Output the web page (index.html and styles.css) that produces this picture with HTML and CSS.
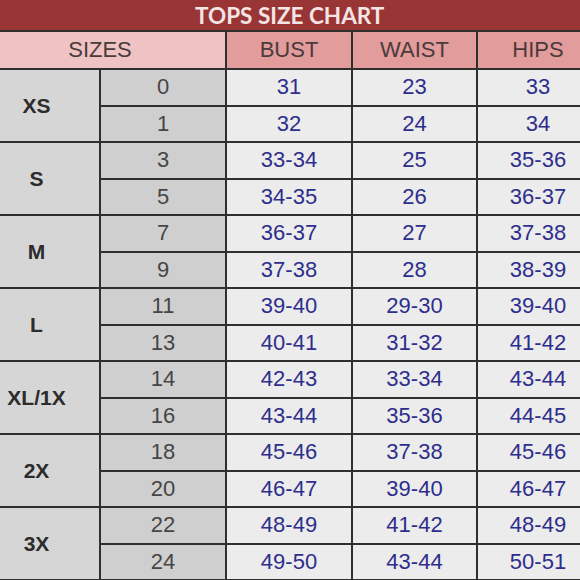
FILE: index.html
```html
<!DOCTYPE html>
<html>
<head>
<meta charset="utf-8">
<link rel="stylesheet" href="styles.css">
</head>
<body>
<div class="frame">
  <div class="chart">
    <div class="title">TOPS SIZE CHART</div>
    <div class="hd hd-sizes">SIZES</div>
    <div class="hd">BUST</div>
    <div class="hd">WAIST</div>
    <div class="hd">HIPS</div>

    <div class="lbl">XS</div>
    <div class="num">0</div><div class="val">31</div><div class="val">23</div><div class="val">33</div>
    <div class="num">1</div><div class="val">32</div><div class="val">24</div><div class="val">34</div>

    <div class="lbl">S</div>
    <div class="num">3</div><div class="val">33-34</div><div class="val">25</div><div class="val">35-36</div>
    <div class="num">5</div><div class="val">34-35</div><div class="val">26</div><div class="val">36-37</div>

    <div class="lbl">M</div>
    <div class="num">7</div><div class="val">36-37</div><div class="val">27</div><div class="val">37-38</div>
    <div class="num">9</div><div class="val">37-38</div><div class="val">28</div><div class="val">38-39</div>

    <div class="lbl">L</div>
    <div class="num">11</div><div class="val">39-40</div><div class="val">29-30</div><div class="val">39-40</div>
    <div class="num">13</div><div class="val">40-41</div><div class="val">31-32</div><div class="val">41-42</div>

    <div class="lbl">XL/1X</div>
    <div class="num">14</div><div class="val">42-43</div><div class="val">33-34</div><div class="val">43-44</div>
    <div class="num">16</div><div class="val">43-44</div><div class="val">35-36</div><div class="val">44-45</div>

    <div class="lbl">2X</div>
    <div class="num">18</div><div class="val">45-46</div><div class="val">37-38</div><div class="val">45-46</div>
    <div class="num">20</div><div class="val">46-47</div><div class="val">39-40</div><div class="val">46-47</div>

    <div class="lbl">3X</div>
    <div class="num">22</div><div class="val">48-49</div><div class="val">41-42</div><div class="val">48-49</div>
    <div class="num">24</div><div class="val">49-50</div><div class="val">43-44</div><div class="val">50-51</div>
  </div>
</div>
</body>
</html>
```
FILE: styles.css
```css
html, body {
  margin: 0;
  padding: 0;
  background: #ececec;
}

.frame {
  width: 580px;
  height: 580px;
  overflow: hidden;
}

.chart {
  width: 598px;
  height: 580px;
  box-sizing: border-box;
  padding-bottom: 1px;
  display: grid;
  grid-template-columns: 99px 124px 124px 123px 120px;
  grid-template-rows: 30px 36px repeat(14, 1fr);
  gap: 2px;
  background: #2f2f2f;
  font-family: "Liberation Sans", Arial, sans-serif;
  font-size: 22px;
}

.chart > div {
  display: flex;
  align-items: center;
  justify-content: center;
}

.title {
  grid-column: 1 / -1;
  background: #993535;
  color: #f4e4e4;
  font-family: Lato, "Open Sans", sans-serif;
  font-weight: 700;
  font-size: 22.5px;
  justify-content: flex-start !important;
  padding-left: 195px;
}

.hd {
  background: #e29c9c;
  color: #4a3a3a;
}

.hd-sizes {
  grid-column: span 2;
  background: #efc3c3;
  padding-right: 25px;
}

.lbl {
  grid-row: span 2;
  grid-column: 1;
  background: #d6d6d6;
  color: #2c2c2c;
  font-weight: 700;
  font-size: 21px;
  padding-right: 26px;
}

.num {
  background: #cfcfcf;
  color: #464646;
}

.val {
  background: #ececec;
  color: #2e2e8c;
}
```
